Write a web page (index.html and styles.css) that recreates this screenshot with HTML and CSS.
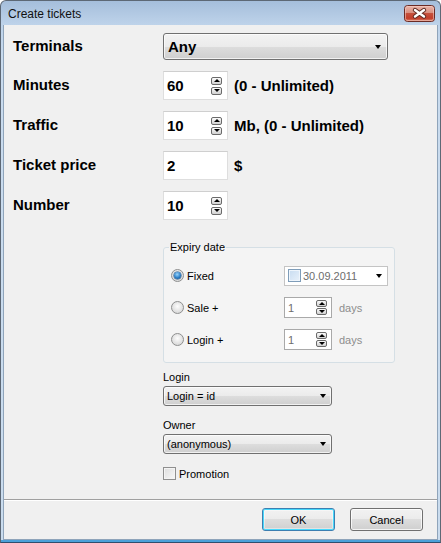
FILE: index.html
```html
<!DOCTYPE html>
<html>
<head>
<meta charset="utf-8">
<title>Create tickets</title>
<link rel="stylesheet" href="styles.css">
</head>
<body>
<div class="window">
  <div class="titlebar">
    <span class="title">Create tickets</span>
    <span class="close">
      <svg width="31" height="17" viewBox="0 0 31 17">
        <defs>
          <linearGradient id="cg" x1="0" y1="0" x2="0" y2="1">
            <stop offset="0" stop-color="#ebb7ab"/>
            <stop offset="0.45" stop-color="#d98f80"/>
            <stop offset="0.5" stop-color="#c5503c"/>
            <stop offset="0.8" stop-color="#c33e2b"/>
            <stop offset="1" stop-color="#de8d74"/>
          </linearGradient>
        </defs>
        <rect x="0.5" y="0.5" width="30" height="16" rx="3" fill="url(#cg)" stroke="#6b2b25"/>
        <rect x="1.5" y="1.5" width="28" height="14" rx="2" fill="none" stroke="#f6d2ca" stroke-opacity="0.55"/>
        <path d="M11 5 L20 11.5 M20 5 L11 11.5" stroke="#5e2a22" stroke-width="4.4" stroke-linecap="round"/>
        <path d="M11 5 L20 11.5 M20 5 L11 11.5" stroke="#ffffff" stroke-width="2.4" stroke-linecap="round"/>
      </svg>
    </span>
  </div>
  <div class="client">
    <div class="main">
      <div class="row row-combo">
        <div class="label">Terminals</div>
        <div class="combo combo-big"><span class="ctext">Any</span><i class="arrow"></i></div>
      </div>
      <div class="row">
        <div class="label">Minutes</div>
        <div class="input input-big"><span class="itext">60</span><span class="spin"><b class="up"></b><b class="down"></b></span></div>
        <div class="hint">(0 - Unlimited)</div>
      </div>
      <div class="row">
        <div class="label">Traffic</div>
        <div class="input input-big"><span class="itext">10</span><span class="spin"><b class="up"></b><b class="down"></b></span></div>
        <div class="hint">Mb, (0 - Unlimited)</div>
      </div>
      <div class="row">
        <div class="label">Ticket price</div>
        <div class="input input-big"><span class="itext">2</span></div>
        <div class="hint">$</div>
      </div>
      <div class="row">
        <div class="label">Number</div>
        <div class="input input-big"><span class="itext">10</span><span class="spin"><b class="up"></b><b class="down"></b></span></div>
      </div>

      <div class="side">
        <fieldset class="group">
          <legend>Expiry date</legend>
          <div class="grow">
            <span class="radio"><span class="rb on"></span>Fixed</span>
            <div class="date"><span class="cb cb-blue"></span><span class="dtext">30.09.2011</span><i class="arrow"></i></div>
          </div>
          <div class="grow">
            <span class="radio"><span class="rb"></span>Sale +</span>
            <div class="input input-small"><span class="stext">1</span><span class="spin spin-small"><b class="up"></b><b class="down"></b></span></div>
            <span class="days">days</span>
          </div>
          <div class="grow">
            <span class="radio"><span class="rb"></span>Login +</span>
            <div class="input input-small"><span class="stext">1</span><span class="spin spin-small"><b class="up"></b><b class="down"></b></span></div>
            <span class="days">days</span>
          </div>
        </fieldset>

        <div class="flabel first">Login</div>
        <div class="combo combo-small"><span class="stext dark">Login = id</span><i class="arrow"></i></div>
        <div class="flabel">Owner</div>
        <div class="combo combo-small"><span class="stext dark">(anonymous)</span><i class="arrow"></i></div>
        <div class="check"><span class="cb"></span>Promotion</div>
      </div>
    </div>
    <div class="footer">
      <span class="btn btn-ok">OK</span>
      <span class="btn">Cancel</span>
    </div>
  </div>
</div>
</body>
</html>
```
FILE: styles.css
```css
* { box-sizing: border-box; }
html, body { margin: 0; padding: 0; }
body {
  width: 441px;
  height: 543px;
  overflow: hidden;
  background: #ffffff;
  font-family: "Liberation Sans", Arial, sans-serif;
  color: #000;
}
.window {
  width: 441px;
  height: 543px;
  border: 1px solid #5d6875;
  border-bottom-color: #2f4f6e;
  border-radius: 6px 6px 0 0;
  padding: 0 2px 2px;
  display: flex;
  flex-direction: column;
  background:
    linear-gradient(to top, #4ba0d8 2px, transparent 2px),
    linear-gradient(#a5bedb, #bed3ea 24px, #c9dbee 60px, #cadcee);
}
.titlebar {
  height: 24px;
  display: flex;
  align-items: center;
  padding-left: 5px;
}
.title {
  font-size: 12px;
  color: #111;
  flex: 1;
  padding-top: 1px;
}
.close {
  display: block;
  width: 31px;
  height: 17px;
  margin-right: 3px;
}
.close svg { display: block; }
.client {
  flex: 1;
  background: #f0f0f0;
  border: 1px solid #8fa4ba;
  border-top: none;
  display: flex;
  flex-direction: column;
}
.main {
  flex: 1;
  padding: 8px 0 0 8px;
}
.row {
  display: flex;
  align-items: center;
  height: 29px;
  margin-top: 11px;
}
.row-combo {
  height: 27px;
  margin-top: 0;
  margin-bottom: 1px;
}
.label {
  width: 151px;
  font-size: 15px;
  font-weight: bold;
  padding-bottom: 3px;
  padding-left: 1px;
}
.hint {
  font-size: 15px;
  font-weight: bold;
  margin-left: 6px;
  padding-bottom: 1px;
}
.combo {
  display: flex;
  align-items: center;
  border: 1px solid #707070;
  border-radius: 3px;
  background: linear-gradient(#f3f3f3, #ebebeb 50%, #dddddd 50%, #cfcfcf);
  box-shadow: inset 0 0 0 1px rgba(255,255,255,0.7);
}
.combo-big {
  width: 225px;
  height: 27px;
  padding-left: 4px;
}
.ctext {
  font-size: 15px;
  font-weight: bold;
  flex: 1;
}
.arrow {
  display: block;
  width: 0;
  height: 0;
  border-left: 3.5px solid transparent;
  border-right: 3.5px solid transparent;
  border-top: 4px solid #000;
  margin-right: 6px;
}
.input {
  display: flex;
  align-items: center;
  background: #ffffff;
  border: 1px solid #dedede;
  border-top-color: #cfcfcf;
}
.input-big {
  width: 65px;
  height: 29px;
  padding-left: 3px;
}
.itext {
  font-size: 15px;
  font-weight: bold;
  flex: 1;
}
.spin {
  display: flex;
  flex-direction: column;
  gap: 2px;
  margin-right: 5px;
}
.spin b {
  display: flex;
  align-items: center;
  justify-content: center;
  width: 11px;
  height: 8px;
  border: 1px solid #6a6a6a;
  border-radius: 2px;
  background: linear-gradient(#fdfdfd, #e4e4e4 50%, #d2d2d2);
}
.spin b::after {
  content: "";
  display: block;
  width: 0;
  height: 0;
  border-left: 3px solid transparent;
  border-right: 3px solid transparent;
}
.spin .up::after { border-bottom: 3px solid #000; }
.spin .down::after { border-top: 3px solid #000; }
.spin-small { gap: 1px; margin-right: 4px; }
.spin-small b { height: 7px; }

.side {
  margin-left: 151px;
  margin-top: 21px;
}
.group {
  width: 232px;
  margin: 0;
  padding: 11px 0 12px 7px;
  border: 1px solid #d5dfe5;
  border-radius: 3px;
  background: #f4f4f4;
  font-size: 11px;
}
.group legend {
  padding: 0 1px;
  margin-left: -2px;
  font-size: 11px;
  line-height: 13px;
  color: #000;
}
.grow {
  display: flex;
  align-items: center;
  height: 21px;
  margin-bottom: 11px;
  font-size: 11px;
}
.grow:last-child { margin-bottom: 0; }
.radio {
  width: 113px;
  display: flex;
  align-items: center;
}
.rb {
  display: inline-block;
  width: 13px;
  height: 13px;
  border-radius: 50%;
  border: 1px solid #8e8f8f;
  background: radial-gradient(circle at 50% 40%, #fdfdfd, #dcdcdc 70%, #cfcfcf);
  margin-right: 3px;
  position: relative;
}
.rb.on::after {
  content: "";
  position: absolute;
  left: 2px;
  top: 2px;
  width: 7px;
  height: 7px;
  border-radius: 50%;
  background: radial-gradient(circle at 45% 35%, #9ad4fb, #2b7fc7 55%, #0b3f78);
  box-shadow: 0 0 0 0.5px #1e4f80;
}
.date {
  width: 104px;
  height: 20px;
  display: flex;
  align-items: center;
  background: #ffffff;
  border: 1px solid #c4c4c4;
  padding-left: 3px;
}
.cb {
  display: inline-block;
  width: 13px;
  height: 13px;
  border: 1px solid #8f8f8f;
  background: linear-gradient(135deg, #dedede, #f8f8f8);
  box-shadow: inset 0 0 0 1px #f4f4f4;
}
.cb-blue {
  border-color: #7f9db9;
  background: linear-gradient(135deg, #c7dcf1, #e8f1fa);
  box-shadow: inset 0 0 0 1px #eef5fc;
}
.dtext {
  flex: 1;
  margin-left: 2px;
  color: #6d6d6d;
  font-size: 11px;
}
.date .arrow { margin-right: 5px; }
.input-small {
  width: 48px;
  height: 21px;
  padding-left: 3px;
  border-color: #a9a9a9;
}
.stext {
  flex: 1;
  font-size: 11px;
  color: #6d6d6d;
}
.stext.dark { color: #000; }
.days {
  margin-left: 7px;
  color: #8d8d8d;
  font-size: 11px;
}
.flabel {
  font-size: 11px;
  line-height: 13px;
  margin-top: 13px;
  margin-bottom: 2px;
}
.flabel.first { margin-top: 8px; }
.combo-small {
  width: 169px;
  height: 20px;
  padding-left: 3px;
}
.combo-small .arrow { margin-right: 5px; }
.check {
  display: flex;
  align-items: center;
  font-size: 11px;
  margin-top: 13px;
}
.check .cb { margin-right: 3px; }

.footer {
  height: 40px;
  border-top: 1px solid #a0a0a0;
  box-shadow: inset 0 1px 0 #ffffff;
  display: flex;
  justify-content: flex-end;
  align-items: flex-start;
  gap: 15px;
  padding: 8px 14px 0 0;
}
.btn {
  width: 73px;
  height: 23px;
  display: flex;
  align-items: center;
  justify-content: center;
  font-size: 11px;
  border: 1px solid #707070;
  border-radius: 3px;
  background: linear-gradient(#f2f2f2, #ebebeb 50%, #dddddd 50%, #cfcfcf);
  box-shadow: inset 0 0 0 1px rgba(255,255,255,0.75);
}
.btn-ok {
  border-color: #3c7fb1;
  box-shadow: inset 0 0 0 1px #48d8fb, inset 0 0 0 2px rgba(255,255,255,0.4);
}
```
